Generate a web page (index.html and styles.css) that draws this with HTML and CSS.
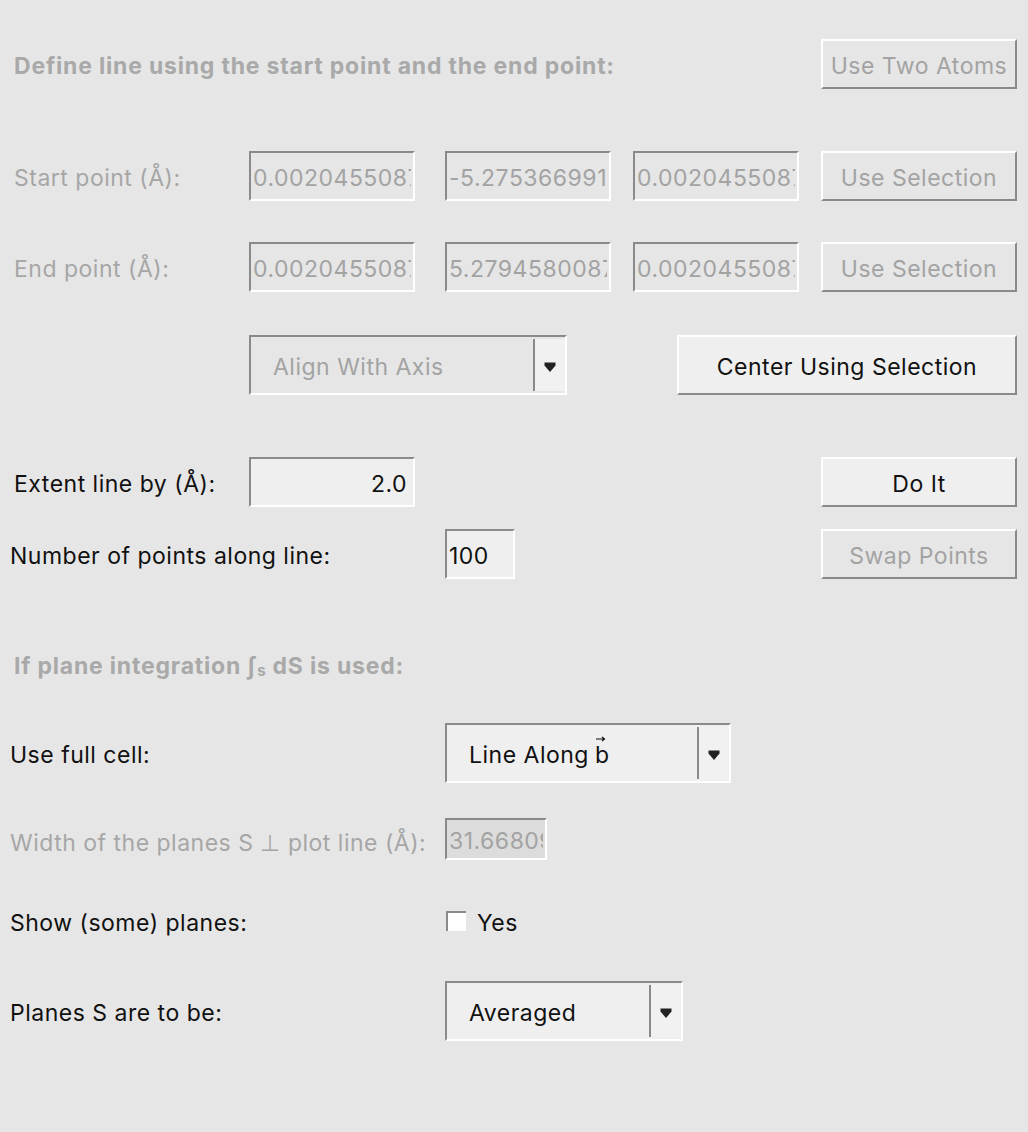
FILE: index.html
```html
<!DOCTYPE html>
<html lang="en">
  <head>
    <meta charset="UTF-8" />
    <meta name="viewport" content="width=device-width, initial-scale=1.0" />
    <title>Line Profile</title>
    <link rel="stylesheet" href="styles.css">
  </head>
  <body>
    <div class="panel">
      <div class="row row-head">
        <div class="heading">Define line using the start point and the end point:</div>
        <button class="btn btn-sm" disabled>Use Two Atoms</button>
      </div>

      <div class="row row-point">
        <label class="label label-a muted">Start point (Å):</label>
        <input class="entry entry-num" value="0.0020455087" disabled>
        <input class="entry entry-num gap-wide" value="-5.2753669914" disabled>
        <input class="entry entry-num gap" value="0.0020455087" disabled>
        <button class="btn btn-sm gap" disabled>Use Selection</button>
      </div>

      <div class="row row-point row-end">
        <label class="label label-a muted">End point (Å):</label>
        <input class="entry entry-num" value="0.0020455087" disabled>
        <input class="entry entry-num gap-wide" value="5.2794580087" disabled>
        <input class="entry entry-num gap" value="0.0020455087" disabled>
        <button class="btn btn-sm gap" disabled>Use Selection</button>
      </div>

      <div class="row row-align">
        <div class="label label-a"></div>
        <div class="combo combo-align disabled">
          <span class="combo-text">Align With Axis</span>
          <span class="combo-arrow"><svg width="12" height="12" viewBox="0 0 12 12"><path d="M0.5 1.5h11v3l-5.5 6.5-5.5-6.5z" fill="#222"/></svg></span>
        </div>
        <button class="btn btn-wide push">Center Using Selection</button>
      </div>

      <div class="row row-extent">
        <label class="label label-a">Extent line by (Å):</label>
        <input class="entry entry-num entry-on right" value="2.0">
        <button class="btn btn-sm push">Do It</button>
      </div>

      <div class="row row-count">
        <label class="label label-b">Number of points along line:</label>
        <input class="entry entry-short entry-on" value="100">
        <button class="btn btn-sm push" disabled>Swap Points</button>
      </div>

      <div class="row row-head2">
        <div class="heading">If plane integration <span class="integral">∫<sub>s</sub></span> dS is used:</div>
      </div>

      <div class="row row-cell">
        <label class="label label-b">Use full cell:</label>
        <div class="combo combo-cell">
          <span class="combo-text">Line Along <span class="vec">b<svg class="vec-arrow" width="10" height="6" viewBox="0 0 10 6"><path d="M0 3h8M6 1l2.5 2L6 5" stroke="#111" stroke-width="1.2" fill="none"/></svg></span></span>
          <span class="combo-arrow"><svg width="12" height="12" viewBox="0 0 12 12"><path d="M0.5 1.5h11v3l-5.5 6.5-5.5-6.5z" fill="#222"/></svg></span>
        </div>
      </div>

      <div class="row row-width">
        <label class="label label-b muted low">Width of the planes S ⊥ plot line (Å):</label>
        <input class="entry entry-width" value="31.66809" disabled>
      </div>

      <div class="row row-show">
        <label class="label label-b">Show (some) planes:</label>
        <span class="check"></span>
        <span class="check-text">Yes</span>
      </div>

      <div class="row row-planes">
        <label class="label label-b">Planes S are to be:</label>
        <div class="combo combo-planes">
          <span class="combo-text">Averaged</span>
          <span class="combo-arrow"><svg width="12" height="12" viewBox="0 0 12 12"><path d="M0.5 1.5h11v3l-5.5 6.5-5.5-6.5z" fill="#222"/></svg></span>
        </div>
      </div>
    </div>
  </body>
</html>
```

FILE: styles.css
```css
body {
  margin: 0;
  padding: 0;
  background: #e6e6e6;
  font-family: Inter, "Open Sans", sans-serif;
  font-size: 23px;
  letter-spacing: 0.5px;
  color: #111;
}
.panel {
  padding: 39px 11px 60px 0;
}
.row {
  display: flex;
  align-items: center;
  height: 50px;
  padding-left: 14px;
}
.row-point { margin-top: 62px; }
.row-end { margin-top: 41px; }
.row-align { margin-top: 43px; height: 60px; }
.row-extent { margin-top: 62px; }
.row-count { margin-top: 22px; padding-left: 10px; }
.row-head2 { margin-top: 70px; height: 30px; }
.row-cell { margin-top: 44px; height: 60px; padding-left: 10px; }
.row-width { margin-top: 35px; height: 42px; padding-left: 10px; }
.row-show { margin-top: 43px; height: 36px; padding-left: 10px; }
.row-planes { margin-top: 42px; height: 60px; padding-left: 10px; }

.heading {
  flex: 1;
  padding-top: 3px;
  font-weight: 700;
  letter-spacing: 0.8px;
  color: #a9a9a9;
}
.integral sub {
  font-size: 15px;
  vertical-align: -2px;
}
.label {
  flex: none;
  padding-top: 3px;
  white-space: nowrap;
}
.label.low { padding-top: 8px; }
.label-a { width: 235px; }
.label-b { width: 435px; }
.muted { color: #a6a6a6; }

.entry {
  box-sizing: border-box;
  height: 50px;
  margin: 0;
  padding: 3px 2px 0;
  font: inherit;
  letter-spacing: 0.5px;
  color: #a3a3a3;
  background: #e6e6e6;
  border: 2px solid;
  border-color: #8a8a8a #fff #fff #8a8a8a;
  outline: none;
  opacity: 1;
  flex: none;
}
.entry-num { width: 166px; }
.entry-on {
  background: #efefef;
  color: #111;
}
.entry.right {
  text-align: right;
  padding-right: 6px;
}
.entry-short { width: 70px; }
.entry-width {
  width: 102px;
  height: 42px;
  background: #dcdcdc;
}

.btn {
  box-sizing: border-box;
  height: 50px;
  margin: 0;
  padding: 3px 0 0;
  font: inherit;
  letter-spacing: 0.5px;
  color: #111;
  background: #efefef;
  border: 2px solid;
  border-color: #fff #8a8a8a #8a8a8a #fff;
  flex: none;
}
.btn:disabled {
  color: #a3a3a3;
  background: #e6e6e6;
}
.btn-sm { width: 196px; }
.btn-wide { width: 340px; height: 60px; }

.gap { margin-left: 22px; }
.gap-wide { margin-left: 30px; }
.push { margin-left: auto; }

.combo {
  box-sizing: border-box;
  display: flex;
  align-items: stretch;
  height: 60px;
  background: #efefef;
  border: 2px solid;
  border-color: #8a8a8a #fff #fff #8a8a8a;
  flex: none;
}
.combo.disabled {
  background: #e6e6e6;
  color: #a3a3a3;
}
.combo-align { width: 318px; }
.combo-cell { width: 286px; }
.combo-planes { width: 238px; }
.combo-text {
  flex: 1;
  display: flex;
  align-items: center;
  padding: 3px 0 0 22px;
  white-space: nowrap;
}
.combo-arrow {
  width: 30px;
  margin: 2px 0;
  padding-top: 3px;
  display: flex;
  align-items: center;
  justify-content: center;
  border-left: 2px solid #8a8a8a;
  background: #f1f1f1;
}
.vec {
  position: relative;
  margin-left: 6px;
}
.vec-arrow {
  position: absolute;
  left: 1px;
  top: -5px;
}

.check {
  box-sizing: border-box;
  width: 20px;
  height: 20px;
  margin-left: 1px;
  background: #fff;
  border-top: 2px solid #8a8a8a;
  border-left: 2px solid #8a8a8a;
}
.check-text {
  margin-left: 11px;
  padding-top: 3px;
}
```
